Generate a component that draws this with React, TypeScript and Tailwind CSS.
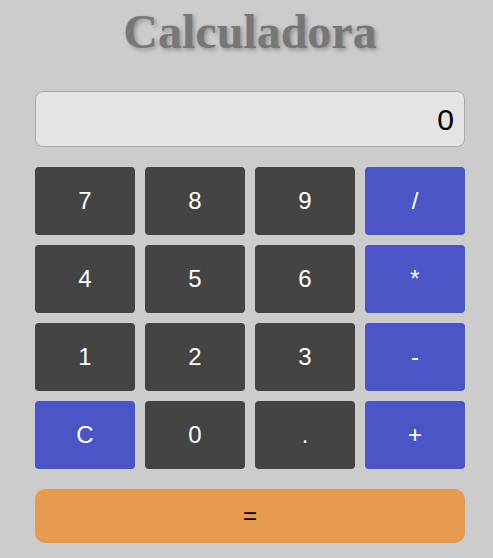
import React from "react";

const keys: { label: string; kind: "num" | "op" }[] = [
  { label: "7", kind: "num" },
  { label: "8", kind: "num" },
  { label: "9", kind: "num" },
  { label: "/", kind: "op" },
  { label: "4", kind: "num" },
  { label: "5", kind: "num" },
  { label: "6", kind: "num" },
  { label: "*", kind: "op" },
  { label: "1", kind: "num" },
  { label: "2", kind: "num" },
  { label: "3", kind: "num" },
  { label: "-", kind: "op" },
  { label: "C", kind: "op" },
  { label: "0", kind: "num" },
  { label: ".", kind: "num" },
  { label: "+", kind: "op" },
];

export default function App() {
  return (
    <div className="min-h-[558px] w-full bg-[#cccccc] pl-[35px] pt-[4px] font-['Liberation_Sans',Arial,sans-serif]">
      <div className="flex w-[430px] flex-col">
        <h1 className="text-center font-['Liberation_Serif','Times_New_Roman',serif] text-[48px] font-bold leading-[56px] text-[#777777] [text-shadow:2px_2px_4px_rgba(0,0,0,0.3)]">
          Calculadora
        </h1>
        <div className="mt-[31px] flex h-[56px] items-center justify-end rounded-[8px] border border-[#aaaaaa] bg-[#e4e4e4] px-[10px] text-[30px] text-black">
          0
        </div>
        <div className="mt-[20px] grid grid-cols-4 gap-[10px]">
          {keys.map((k) => (
            <button
              key={k.label}
              className={
                k.kind === "op"
                  ? "flex h-[68px] items-center justify-center rounded-[4px] bg-[#4b55c5] text-[24px] text-white"
                  : "flex h-[68px] items-center justify-center rounded-[4px] bg-[#444444] text-[24px] text-white"
              }
            >
              {k.label}
            </button>
          ))}
        </div>
        <button className="mt-[20px] flex h-[54px] items-center justify-center rounded-[10px] bg-[#e69b50] text-[24px] text-black">
          =
        </button>
      </div>
    </div>
  );
}
